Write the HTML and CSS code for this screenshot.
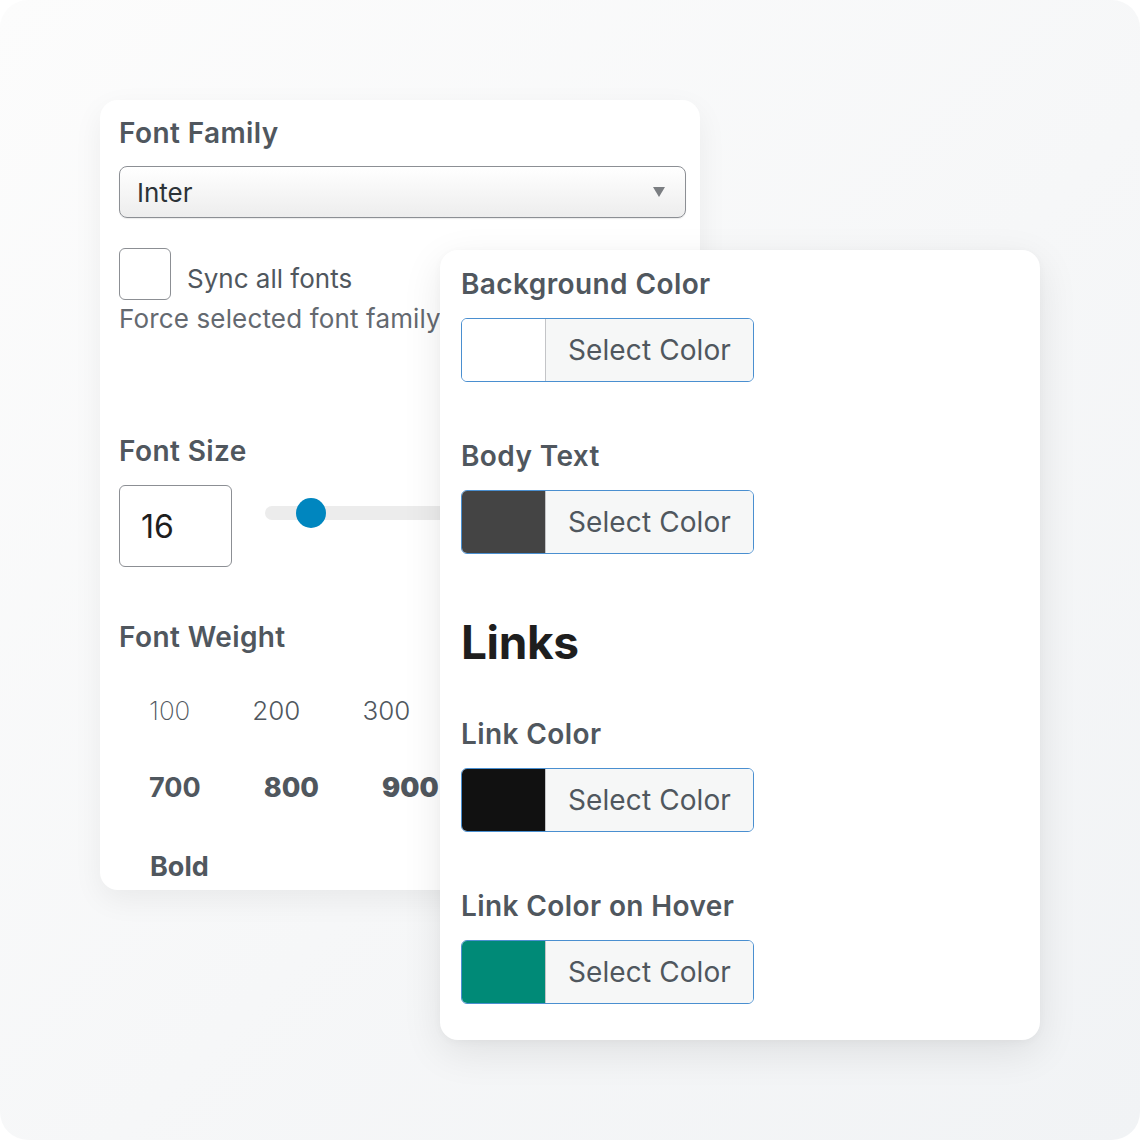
FILE: index.html
```html
<!DOCTYPE html>
<html>
<head>
<meta charset="utf-8">
<link rel="stylesheet" href="styles.css">
</head>
<body>
<div class="stage">
  <div class="card card-left">
    <div class="title">Font Family</div>
    <div class="select">
      <span class="select-value">Inter</span>
      <span class="select-arrow"></span>
    </div>
    <div class="check-row">
      <span class="checkbox"></span>
      <span class="check-label">Sync all fonts</span>
    </div>
    <div class="help">Force selected font family</div>

    <div class="title title-size">Font Size</div>
    <div class="size-row">
      <div class="num-input">16</div>
      <div class="slider">
        <div class="slider-track"></div>
        <div class="slider-thumb"></div>
      </div>
    </div>

    <div class="title title-weight">Font Weight</div>
    <div class="weights weights-light">
      <span class="w w100">100</span>
      <span class="w w200">200</span>
      <span class="w w300">300</span>
    </div>
    <div class="weights weights-bold">
      <span class="w w700">700</span>
      <span class="w w800">800</span>
      <span class="w w900">900</span>
    </div>
    <div class="weights weights-named">
      <span class="w w700">Bold</span>
    </div>
  </div>

  <div class="card card-right">
    <div class="title">Background Color</div>
    <div class="color-btn">
      <span class="swatch sw-white"></span>
      <span class="color-label">Select Color</span>
    </div>

    <div class="title title-gap">Body Text</div>
    <div class="color-btn">
      <span class="swatch sw-gray"></span>
      <span class="color-label">Select Color</span>
    </div>

    <div class="heading">Links</div>

    <div class="title title-link">Link Color</div>
    <div class="color-btn">
      <span class="swatch sw-black"></span>
      <span class="color-label">Select Color</span>
    </div>

    <div class="title title-gap">Link Color on Hover</div>
    <div class="color-btn">
      <span class="swatch sw-teal"></span>
      <span class="color-label">Select Color</span>
    </div>
  </div>
</div>
</body>
</html>
```

FILE: styles.css
```css
* { box-sizing: border-box; }
html, body { margin: 0; padding: 0; background: #ffffff; }
body { font-family: Inter, "Liberation Sans", sans-serif; }

.stage {
  position: relative;
  width: 1140px;
  height: 1140px;
  border-radius: 28px;
  background: linear-gradient(135deg, #fcfcfc 0%, #f6f7f8 55%, #f1f3f5 100%);
  padding: 100px 0 0 100px;
  overflow: hidden;
}

.card {
  background: #ffffff;
  border-radius: 18px;
  width: 600px;
  height: 790px;
}

.card-left {
  padding: 16px 0 0 19px;
  box-shadow: 0 10px 30px rgba(0, 0, 0, 0.06);
}

.card-right {
  position: absolute;
  left: 440px;
  top: 250px;
  padding: 17px 0 0 21px;
  box-shadow: 0 12px 40px rgba(0, 0, 0, 0.09), 0 2px 8px rgba(0, 0, 0, 0.03);
}

.title {
  font-size: 28px;
  line-height: 34px;
  font-weight: 600;
  color: #50575e;
  letter-spacing: 0.4px;
}

.select {
  margin-top: 16px;
  width: 567px;
  height: 52px;
  border: 1px solid #8c8f94;
  border-radius: 8px;
  background: linear-gradient(180deg, #ffffff 0%, #f7f7f7 45%, #ededed 100%);
  display: flex;
  align-items: center;
  justify-content: space-between;
  padding: 0 20px 0 17px;
  box-shadow: 0 1px 1px rgba(0,0,0,0.08);
}
.select-value {
  font-size: 26px;
  color: #2c3338;
}
.select-arrow {
  width: 0;
  height: 0;
  border-left: 6px solid transparent;
  border-right: 6px solid transparent;
  border-top: 10px solid #7b7e82;
}

.check-row {
  margin-top: 30px;
  display: flex;
  align-items: flex-end;
  gap: 16px;
}
.checkbox {
  width: 52px;
  height: 52px;
  border: 1px solid #8c8f94;
  border-radius: 6px;
  background: #fff;
}
.check-label {
  font-size: 26px;
  line-height: 34px;
  color: #50575e;
  margin-bottom: 4px;
}
.help {
  margin-top: 2px;
  font-size: 26px;
  line-height: 34px;
  color: #646970;
  white-space: nowrap;
  letter-spacing: 0.15px;
}

.title-size { margin-top: 98px; }

.size-row {
  margin-top: 17px;
  display: flex;
  align-items: center;
  gap: 33px;
}
.num-input {
  width: 113px;
  height: 82px;
  border: 1px solid #8c8f94;
  border-radius: 6px;
  display: flex;
  align-items: center;
  padding-left: 21px;
  font-size: 32px;
  color: #1e1e1e;
}
.slider {
  position: relative;
  width: 320px;
  height: 32px;
  margin-top: -26px;
}
.slider-track {
  position: absolute;
  left: 0;
  right: 0;
  top: 9px;
  height: 14px;
  border-radius: 7px;
  background: #ececec;
}
.slider-thumb {
  position: absolute;
  left: 31px;
  top: 1px;
  width: 30px;
  height: 30px;
  border-radius: 50%;
  background: #0086bf;
}

.title-weight { margin-top: 53px; }

.weights {
  display: flex;
  gap: 63px;
  padding-left: 30px;
  font-size: 26px;
  line-height: 34px;
  color: #50575e;
}
.weights-light { margin-top: 40px; gap: 62px; }
.weights-bold { margin-top: 43px; font-size: 27px; }
.weights-named { margin-top: 45px; padding-left: 31px; font-size: 27px; }
.w100 { font-weight: 200; }
.w200 { font-weight: 300; }
.w300 { font-weight: 300; }
.w700 { font-weight: 700; }
.w800 { font-weight: 800; }
.w900 { font-weight: 900; }

.color-btn {
  margin-top: 17px;
  width: 293px;
  height: 64px;
  border: 1px solid #4a8fd0;
  border-radius: 6px;
  overflow: hidden;
  display: flex;
}
.swatch {
  width: 84px;
  border-right: 1px solid #c3c4c7;
}
.sw-white { background: #ffffff; }
.sw-gray { background: #444444; }
.sw-black { background: #111111; }
.sw-teal { background: #008a77; }
.color-label {
  flex: 1;
  background: #f6f7f7;
  display: flex;
  align-items: center;
  padding-left: 22px;
  font-size: 28px;
  color: #50575e;
  letter-spacing: 0.1px;
}

.title-gap { margin-top: 57px; }

.heading {
  margin-top: 60px;
  font-size: 46px;
  line-height: 56px;
  font-weight: 700;
  color: #1e1e1e;
  letter-spacing: -0.4px;
}
.title-link { margin-top: 47px; }
```
